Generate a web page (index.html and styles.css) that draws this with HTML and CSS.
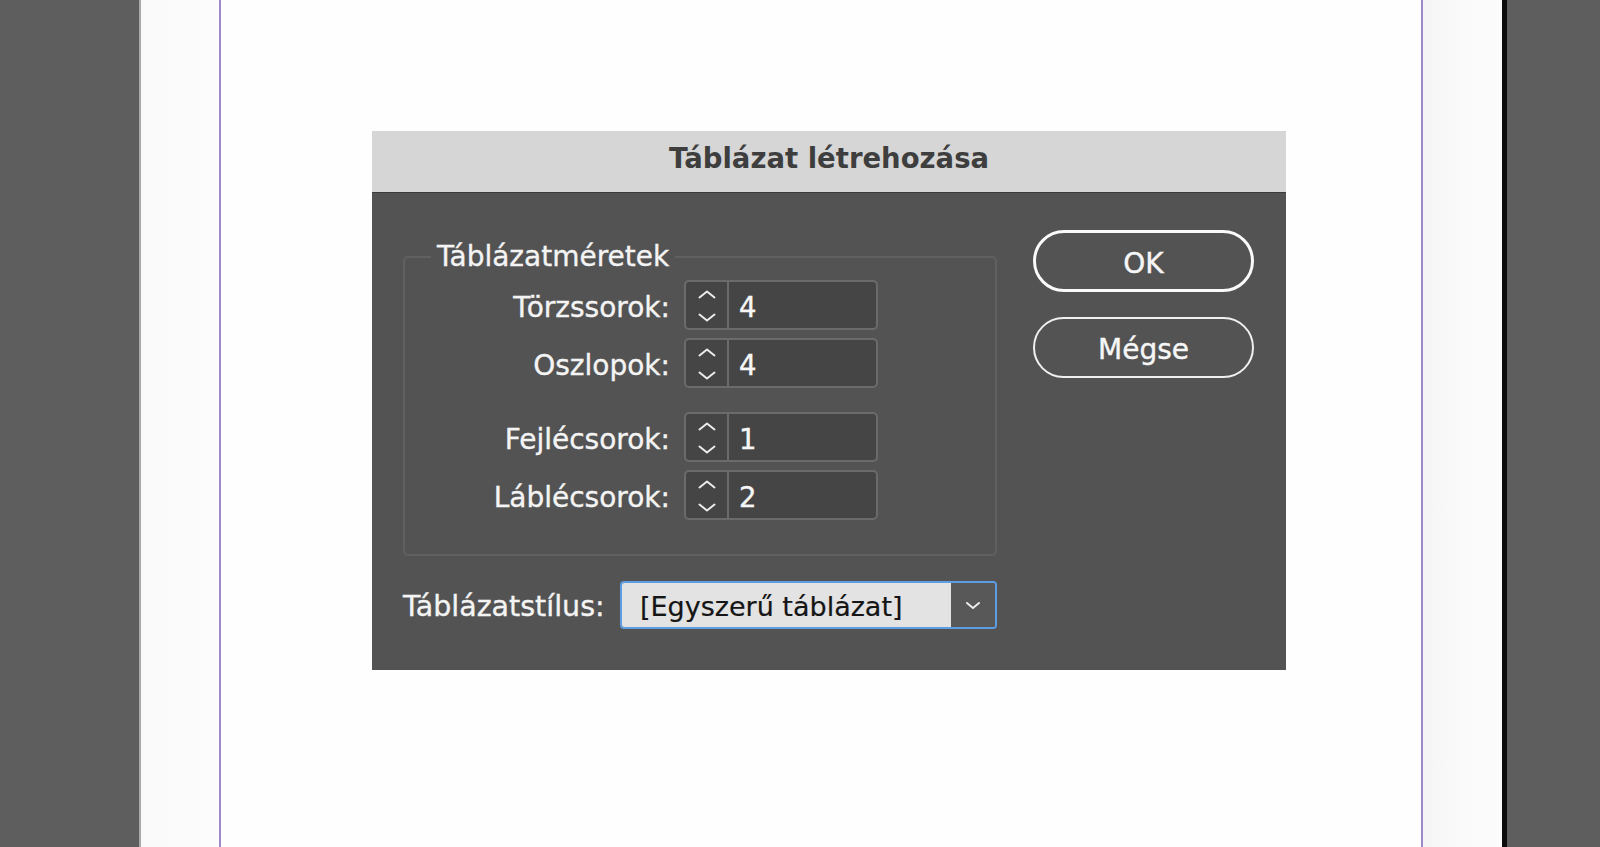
FILE: index.html
```html
<!DOCTYPE html>
<html lang="hu">
<head>
<meta charset="utf-8">
<title>Táblázat létrehozása</title>
<link rel="stylesheet" href="styles.css">
</head>
<body>
<div class="workspace">
  <div class="pasteboard pasteboard-left"></div>
  <div class="page">
    <div class="page-gutter gutter-left"></div>
    <div class="page-body"></div>
    <div class="page-gutter gutter-right"></div>
  </div>
  <div class="page-shadow"></div>
  <div class="pasteboard pasteboard-right"></div>
</div>

<div class="dialog">
  <div class="dialog-title">Táblázat létrehozása</div>
  <div class="dialog-body">
    <div class="dialog-main">
      <fieldset class="group">
        <legend class="group-legend">Táblázatméretek</legend>
        <div class="field-grid">
          <label class="field-label">Törzssorok:</label>
          <div class="stepper">
            <div class="stepper-arrows">
              <svg class="chev" width="18" height="9" viewBox="0 0 18 9"><polyline points="1.5,7.5 9,1.5 16.5,7.5"/></svg>
              <svg class="chev" width="18" height="9" viewBox="0 0 18 9"><polyline points="1.5,1.5 9,7.5 16.5,1.5"/></svg>
            </div>
            <div class="stepper-value">4</div>
          </div>

          <label class="field-label">Oszlopok:</label>
          <div class="stepper">
            <div class="stepper-arrows">
              <svg class="chev" width="18" height="9" viewBox="0 0 18 9"><polyline points="1.5,7.5 9,1.5 16.5,7.5"/></svg>
              <svg class="chev" width="18" height="9" viewBox="0 0 18 9"><polyline points="1.5,1.5 9,7.5 16.5,1.5"/></svg>
            </div>
            <div class="stepper-value">4</div>
          </div>

          <label class="field-label spaced">Fejlécsorok:</label>
          <div class="stepper spaced">
            <div class="stepper-arrows">
              <svg class="chev" width="18" height="9" viewBox="0 0 18 9"><polyline points="1.5,7.5 9,1.5 16.5,7.5"/></svg>
              <svg class="chev" width="18" height="9" viewBox="0 0 18 9"><polyline points="1.5,1.5 9,7.5 16.5,1.5"/></svg>
            </div>
            <div class="stepper-value">1</div>
          </div>

          <label class="field-label">Láblécsorok:</label>
          <div class="stepper">
            <div class="stepper-arrows">
              <svg class="chev" width="18" height="9" viewBox="0 0 18 9"><polyline points="1.5,7.5 9,1.5 16.5,7.5"/></svg>
              <svg class="chev" width="18" height="9" viewBox="0 0 18 9"><polyline points="1.5,1.5 9,7.5 16.5,1.5"/></svg>
            </div>
            <div class="stepper-value">2</div>
          </div>
        </div>
      </fieldset>

      <div class="style-row">
        <label class="style-label">Táblázatstílus:</label>
        <div class="select">
          <div class="select-value">[Egyszerű táblázat]</div>
          <div class="select-button">
            <svg width="16" height="9" viewBox="0 0 16 9"><polyline points="2,2 8,7 14,2"/></svg>
          </div>
        </div>
      </div>
    </div>

    <div class="dialog-buttons">
      <button class="btn btn-default">OK</button>
      <button class="btn">Mégse</button>
    </div>
  </div>
</div>
</body>
</html>
```

FILE: styles.css
```css
* { box-sizing: border-box; }

html, body {
  margin: 0;
  padding: 0;
  width: 1600px;
  height: 847px;
  overflow: hidden;
  font-family: "DejaVu Sans", "Liberation Sans", sans-serif;
}

.workspace {
  display: flex;
  width: 1600px;
  height: 847px;
}

.pasteboard {
  background: #5e5e5e;
}

.pasteboard-left {
  width: 141px;
  border-right: 2px solid #a9a9a9;
}

.pasteboard-right {
  flex: 1;
}

.page {
  width: 1361px;
  display: flex;
  background: #fefefe;
}

.page-gutter {
  background: linear-gradient(to right, #f9f9f9, #fbfbfb 60%, #fdfdfd);
}

.gutter-left {
  width: 80px;
  border-right: 2px solid #9f89c8;
}

.gutter-right {
  width: 81px;
  border-left: 2px solid #9f89c8;
  background: linear-gradient(to right, #f5f5f5, #f9f9f9 40%, #fcfcfc);
}

.page-body {
  flex: 1;
  background: #fefefe;
}

.page-shadow {
  width: 5px;
  background: #0c0c0c;
}

/* ---------- Dialog ---------- */
.dialog {
  position: absolute;
  left: 372px;
  top: 131px;
  width: 914px;
  background: #535353;
}

.dialog-title {
  height: 62px;
  background: #d6d6d6;
  border-bottom: 1px solid #3b3b3b;
  color: #3e3e3e;
  font-weight: bold;
  font-size: 27.5px;
  display: flex;
  align-items: center;
  justify-content: center;
  padding-bottom: 8px;
}

.dialog-body {
  display: flex;
  align-items: flex-start;
  gap: 36px;
  padding: 36px 32px 41px 31px;
}

.dialog-main {
  width: 594px;
  margin-top: 11px;
}

/* ---------- Group box ---------- */
.group {
  margin: 0;
  padding: 6px 0 34px 0;
  border: 2px solid #606060;
  border-radius: 5px;
  min-width: 0;
}

.group-legend {
  margin-left: 26px;
  padding: 0 6px;
  font-size: 28px;
  line-height: 34px;
  color: #f4f4f4;
  -webkit-text-stroke: 0.35px #f4f4f4;
}

.field-grid {
  display: grid;
  grid-template-columns: 265px 194px;
  column-gap: 14px;
  row-gap: 8px;
  align-items: center;
}

.field-grid .spaced {
  margin-top: 16px;
}

.field-label {
  text-align: right;
  font-size: 28px;
  color: #f4f4f4;
  white-space: nowrap;
  padding-top: 4px;
  -webkit-text-stroke: 0.35px #f4f4f4;
}

.stepper {
  display: flex;
  height: 50px;
  border: 2px solid #6b6b6b;
  border-radius: 5px;
  background: #454545;
}

.stepper-arrows {
  width: 43px;
  border-right: 2px solid #6b6b6b;
  display: flex;
  flex-direction: column;
  align-items: center;
  justify-content: center;
  gap: 14px;
  padding-top: 1px;
}

.chev polyline,
.select-button polyline {
  fill: none;
  stroke: #ececec;
  stroke-width: 2;
  stroke-linecap: round;
  stroke-linejoin: round;
}

.stepper-value {
  flex: 1;
  display: flex;
  align-items: center;
  padding-left: 10px;
  padding-top: 4px;
  font-size: 27.5px;
  color: #f6f6f6;
  -webkit-text-stroke: 0.4px #f6f6f6;
}

/* ---------- Style row ---------- */
.style-row {
  display: flex;
  align-items: center;
  margin-top: 25px;
}

.style-label {
  width: 217px;
  font-size: 28.5px;
  color: #f4f4f4;
  white-space: nowrap;
  padding-top: 3px;
  -webkit-text-stroke: 0.35px #f4f4f4;
}

.select {
  display: flex;
  width: 377px;
  height: 48px;
  border: 2px solid #5f9de2;
  border-radius: 4px;
  overflow: hidden;
}

.select-value {
  flex: 1;
  background: #e3e3e3;
  color: #151515;
  font-size: 27px;
  display: flex;
  align-items: center;
  padding-left: 18px;
  padding-top: 2px;
  white-space: nowrap;
  -webkit-text-stroke: 0.2px #151515;
}

.select-button {
  width: 44px;
  background: #585858;
  display: flex;
  align-items: center;
  justify-content: center;
}

/* ---------- Buttons ---------- */
.dialog-buttons {
  display: flex;
  flex-direction: column;
  gap: 25px;
  width: 221px;
  margin-top: 1px;
}

.btn {
  height: 61px;
  border: 2px solid #f0f0f0;
  border-radius: 31px;
  background: transparent;
  color: #f6f6f6;
  font-family: "DejaVu Sans", "Liberation Sans", sans-serif;
  font-size: 28px;
  padding: 4px 0 0 0;
  margin: 0;
  -webkit-text-stroke: 0.4px #f6f6f6;
}

.btn-default {
  height: 62px;
  border-width: 3px;
  border-color: #fafafa;
}
```
